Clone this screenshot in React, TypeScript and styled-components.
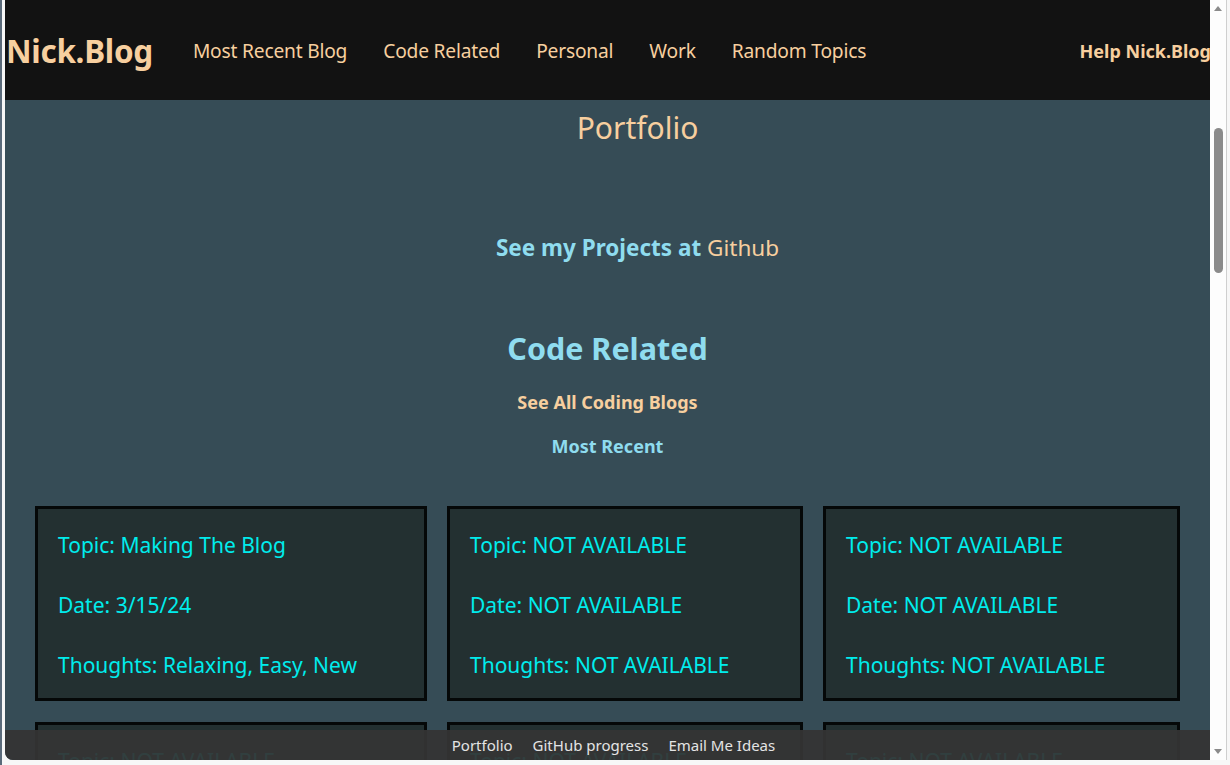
import React from "react";
import styled, { createGlobalStyle } from "styled-components";

const Global = createGlobalStyle`
  html, body { margin: 0; padding: 0; background: #f3f3f3; overflow: hidden; }
  * { box-sizing: border-box; }
  body { font-family: "Noto Sans", "Open Sans", sans-serif; }
`;

const Window = styled.div`
  width: 1230px;
  height: 765px;
  padding: 0 3px 5px 3px;
  background: #f7f7f7;
  border-left: 2px solid #5a6a7a;
  display: flex;
`;

const Viewport = styled.div`
  flex: 1;
  display: flex;
  border-bottom-left-radius: 8px;
  border-right: 1px solid #cfcfcf;
  overflow: hidden;
`;

const Page = styled.div`
  position: relative;
  flex: 1;
  background: #364c56;
  overflow: hidden;
`;

const Scrollbar = styled.div`
  width: 16px;
  background: #fdfdfd;
  display: flex;
  flex-direction: column;
  align-items: center;
  padding: 6px 0;
`;

const Arrow = styled.div<{ $down?: boolean }>`
  width: 0;
  height: 0;
  border-left: 4px solid transparent;
  border-right: 4px solid transparent;
  ${(p) => (p.$down ? "border-top: 5px solid #8a8a8a;" : "border-bottom: 5px solid #8a8a8a;")}
`;

const Track = styled.div`
  flex: 1;
  width: 100%;
  display: flex;
  flex-direction: column;
  align-items: center;
  padding-top: 117px;
`;

const Thumb = styled.div`
  width: 9px;
  height: 145px;
  border-radius: 5px;
  background: #8b8b8b;
`;

const Header = styled.header`
  height: 100px;
  background: #121212;
  display: flex;
  align-items: center;
  padding-left: 1px;
`;

const Logo = styled.a`
  font-size: 31.5px;
  font-weight: 700;
  color: #f7cf9f;
  text-decoration: none;
  margin-right: 40px;
  letter-spacing: -0.3px;
  margin-top: 1px;
`;

const Nav = styled.nav`
  display: flex;
  gap: 36px;
  flex: 1;
`;

const NavLink = styled.a`
  font-size: 19.2px;
  color: #f7cf9f;
  text-decoration: none;
  letter-spacing: -0.2px;
`;

const Help = styled.a`
  font-size: 18px;
  font-weight: 700;
  color: #f7cf9f;
  text-decoration: none;
  white-space: nowrap;
  margin-right: -1px;
  margin-top: 1px;
`;

const Intro = styled.section`
  display: flex;
  flex-direction: column;
  align-items: center;
  padding-left: 60px;
`;

const Title = styled.h1`
  margin: 8px 0 0;
  font-size: 30px;
  font-weight: 400;
  color: #f7cf9f;
  line-height: 40px;
`;

const ProjectLine = styled.p`
  margin: 85px 0 0;
  font-size: 22.5px;
  line-height: 30px;
  font-weight: 700;
  color: #8fdcef;
`;

const GithubLink = styled.a`
  color: #f7cf9f;
  font-weight: 400;
  text-decoration: none;
`;

const Section = styled.section`
  display: flex;
  flex-direction: column;
  align-items: center;
`;

const SectionTitle = styled.h2`
  margin: 64px 0 0;
  font-size: 30.5px;
  line-height: 42px;
  font-weight: 700;
  color: #8fdcef;
`;

const SubLink = styled.a<{ $cyan?: boolean }>`
  margin-top: ${(p) => (p.$cyan ? "19px" : "21px")};
  font-size: 18px;
  line-height: 25px;
  font-weight: 700;
  color: ${(p) => (p.$cyan ? "#8fdcef" : "#f7cf9f")};
  text-decoration: none;
`;

const Grid = styled.div`
  display: grid;
  grid-template-columns: 392px 356px 357px;
  gap: 21px 20px;
  margin-top: 47px;
  justify-content: center;
`;

const Card = styled.div`
  background: #233031;
  border: 3px solid #050808;
  padding: 21px 20px 18px;
  display: flex;
  flex-direction: column;
  gap: 30px;
`;

const CardLine = styled.div`
  font-size: 21px;
  line-height: 30px;
  color: #00ecec;
  white-space: nowrap;
`;

const Footer = styled.footer`
  position: absolute;
  left: 0;
  right: 0;
  bottom: 0;
  height: 30px;
  background: rgba(52, 52, 52, 0.94);
  display: flex;
  justify-content: center;
  align-items: center;
  gap: 20px;
  padding-left: 12px;
`;

const FooterLink = styled.a`
  font-size: 15px;
  color: #e4e4e4;
  text-decoration: none;
`;

const cards = [
  { topic: "Making The Blog", date: "3/15/24", thoughts: "Relaxing, Easy, New" },
  { topic: "NOT AVAILABLE", date: "NOT AVAILABLE", thoughts: "NOT AVAILABLE" },
  { topic: "NOT AVAILABLE", date: "NOT AVAILABLE", thoughts: "NOT AVAILABLE" },
  { topic: "NOT AVAILABLE", date: "NOT AVAILABLE", thoughts: "NOT AVAILABLE" },
  { topic: "NOT AVAILABLE", date: "NOT AVAILABLE", thoughts: "NOT AVAILABLE" },
  { topic: "NOT AVAILABLE", date: "NOT AVAILABLE", thoughts: "NOT AVAILABLE" },
];

export default function App() {
  return (
    <>
      <Global />
      <Window>
        <Viewport>
          <Page>
            <Header>
              <Logo href="#">Nick.Blog</Logo>
              <Nav>
                <NavLink href="#">Most Recent Blog</NavLink>
                <NavLink href="#">Code Related</NavLink>
                <NavLink href="#">Personal</NavLink>
                <NavLink href="#">Work</NavLink>
                <NavLink href="#">Random Topics</NavLink>
              </Nav>
              <Help href="#">Help Nick.Blog</Help>
            </Header>
            <Intro>
              <Title>Portfolio</Title>
              <ProjectLine>
                See my Projects at <GithubLink href="#">Github</GithubLink>
              </ProjectLine>
            </Intro>
            <Section>
              <SectionTitle>Code Related</SectionTitle>
              <SubLink href="#">See All Coding Blogs</SubLink>
              <SubLink href="#" $cyan>Most Recent</SubLink>
              <Grid>
                {cards.map((c, i) => (
                  <Card key={i}>
                    <CardLine>Topic: {c.topic}</CardLine>
                    <CardLine>Date: {c.date}</CardLine>
                    <CardLine>Thoughts: {c.thoughts}</CardLine>
                  </Card>
                ))}
              </Grid>
            </Section>
            <Footer>
              <FooterLink href="#">Portfolio</FooterLink>
              <FooterLink href="#">GitHub progress</FooterLink>
              <FooterLink href="#">Email Me Ideas</FooterLink>
            </Footer>
          </Page>
          <Scrollbar>
            <Arrow />
            <Track>
              <Thumb />
            </Track>
            <Arrow $down />
          </Scrollbar>
        </Viewport>
      </Window>
    </>
  );
}
